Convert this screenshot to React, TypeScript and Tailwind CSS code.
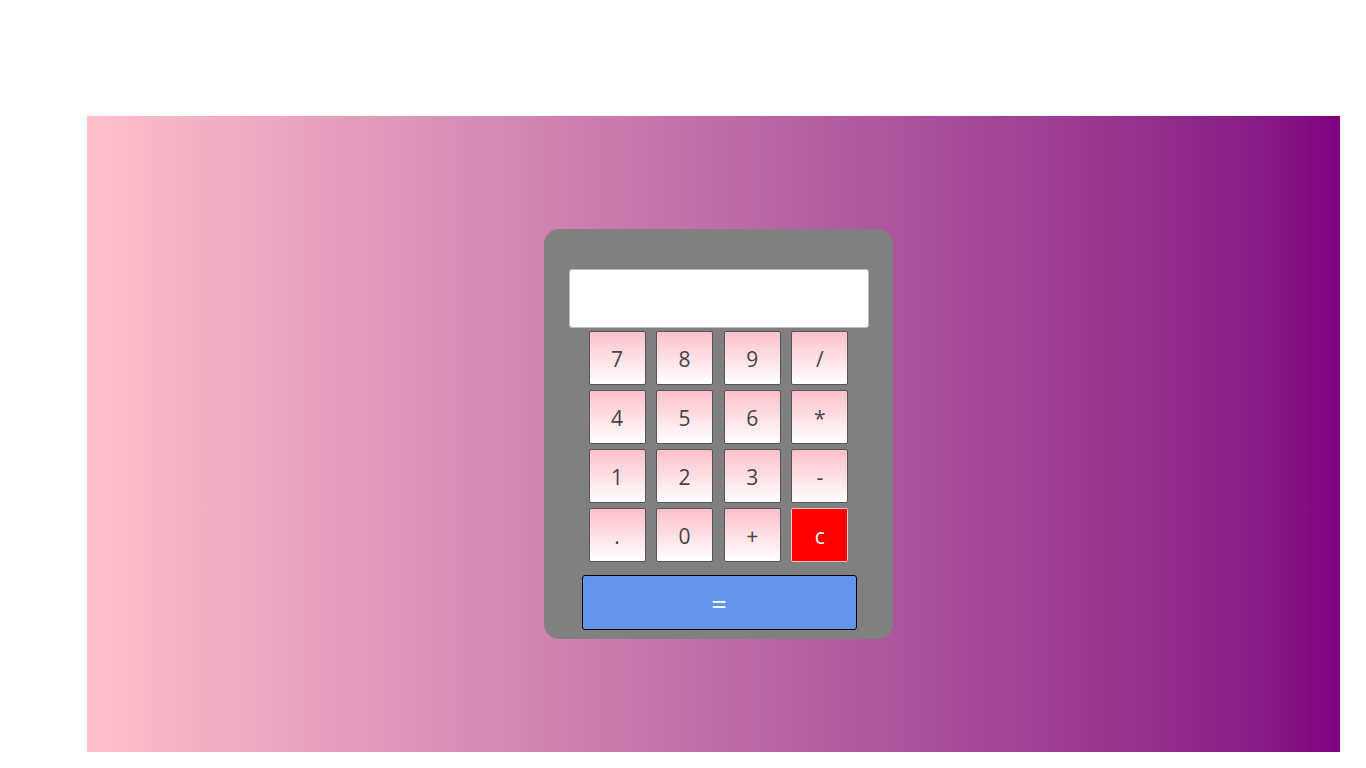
const keys = ["7", "8", "9", "/", "4", "5", "6", "*", "1", "2", "3", "-", ".", "0", "+"];

export default function App() {
  return (
    <main className="min-h-screen bg-white font-['Open_Sans',sans-serif]">
      <div className="pl-[87px] pt-[116px]">
        <section className="flex h-[636px] w-[1253px] items-center justify-center bg-gradient-to-r from-[#ffc0cb] to-[#800080]">
          <div className="ml-[9px] flex h-[410px] w-[349px] flex-col rounded-[15px] bg-[#808080]">
            <input
              type="text"
              readOnly
              className="ml-[25px] mt-[40px] h-[59px] w-[300px] rounded-[3px] border border-[#bbbbbb] bg-white outline-none"
            />
            <div className="ml-[45px] mt-[3px] grid w-[260px] grid-cols-4 gap-x-[10.5px] gap-y-[5px]">
              {keys.map((k) => (
                <button
                  key={k}
                  className="flex h-[54px] w-[57px] items-center justify-center rounded-[2px] border border-[#555] bg-gradient-to-b from-[#ffc0cb] to-white pt-[3px] text-[21px] text-[#444]"
                >
                  {k}
                </button>
              ))}
              <button className="flex h-[54px] w-[57px] items-center justify-center rounded-[2px] border border-[#ffc0cb] bg-[#ff0000] pt-[3px] text-[21px] text-white">
                c
              </button>
            </div>
            <button className="ml-[38px] mt-[13px] flex h-[55px] w-[275px] items-center justify-center rounded-[3px] border border-black bg-[#6495ed] pt-[3px] text-[27px] font-medium text-white">
              =
            </button>
          </div>
        </section>
      </div>
    </main>
  );
}
